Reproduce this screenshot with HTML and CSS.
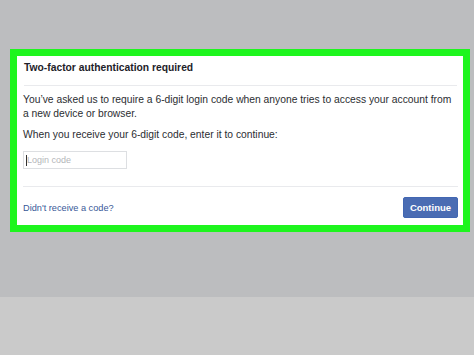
FILE: index.html
```html
<!DOCTYPE html>
<html lang="en">
<head>
    <meta charset="UTF-8">
    <meta name="viewport" content="width=device-width, initial-scale=1.0">
    <title>Two-factor authentication required</title>
    <link rel="stylesheet" href="styles.css">
</head>
<body>
    <div class="stage">
        <div class="frame">
            <div class="card">
                <h2 class="card-title">Two-factor authentication required</h2>
                <div class="card-body">
                    <p>You’ve asked us to require a 6-digit login code when anyone tries to access your account from a new device or browser.</p>
                    <p>When you receive your 6-digit code, enter it to continue:</p>
                    <div class="code-input">
                        <span class="caret"></span>
                        <span class="placeholder">Login code</span>
                    </div>
                </div>
                <div class="card-footer">
                    <a href="#" class="link">Didn't receive a code?</a>
                    <button class="btn">Continue</button>
                </div>
            </div>
        </div>
    </div>
    <div class="bottom-band"></div>
</body>
</html>
```

FILE: styles.css
```css
html, body {
    margin: 0;
    padding: 0;
}
body {
    font-family: "Liberation Sans", Arial, sans-serif;
    background-color: #bcbdbf;
    width: 474px;
    height: 355px;
    overflow: hidden;
}
.stage {
    height: 297px;
    padding: 49px 4px 0 10px;
    box-sizing: border-box;
}
.frame {
    border: 7px solid #1ef51e;
    background-color: #fff;
}
.card {
    background-color: #fff;
}
.card-title {
    margin: 0 6px 0 7px;
    padding: 5px 0 10px;
    font-size: 10.3px;
    line-height: 14px;
    font-weight: bold;
    color: #1d2129;
    border-bottom: 1px solid #e9eaed;
}
.card-body {
    margin: 0 5px 0 6px;
    padding: 7px 0 17px;
    border-bottom: 1px solid #e9eaed;
}
.card-body p {
    max-width: 432px;
    margin: 0 0 7px;
    font-size: 10.3px;
    line-height: 14px;
    color: #2b2d31;
}
.code-input {
    margin-top: 9px;
    width: 104px;
    height: 18px;
    box-sizing: border-box;
    border: 1px solid #dddfe2;
    display: flex;
    align-items: center;
    padding-left: 2px;
}
.caret {
    width: 1px;
    height: 11px;
    background-color: #333;
}
.placeholder {
    font-size: 9px;
    color: #b4b6ba;
}
.card-footer {
    display: flex;
    justify-content: space-between;
    align-items: center;
    margin: 0 5px 0 6px;
    padding: 10px 0 7px;
}
.link {
    font-size: 9.2px;
    color: #385898;
    text-decoration: none;
}
.btn {
    width: 55px;
    height: 21px;
    padding: 0;
    border: 1px solid #4267b2;
    border-radius: 2px;
    background-color: #4a6cb3;
    color: #fff;
    font-family: "Liberation Sans", Arial, sans-serif;
    font-size: 9.5px;
    font-weight: bold;
}
.bottom-band {
    height: 58px;
    background-color: #cacaca;
}
```
